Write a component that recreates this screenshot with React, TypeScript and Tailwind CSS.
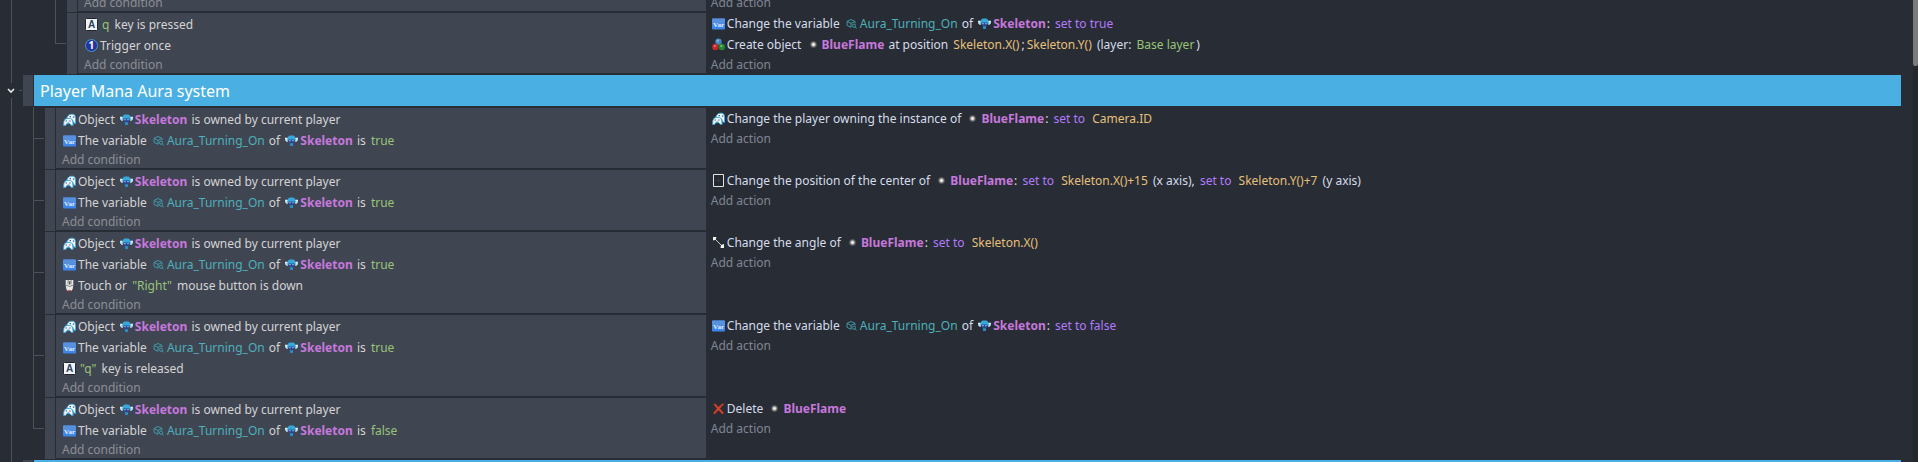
import type { ReactNode } from 'react'

type Token =
  | string
  | { kind: 'skeleton' | 'flame' | 'variable' | 'green' | 'operator' | 'expression'; text: string }

type IconName = 'owner' | 'var' | 'key' | 'once' | 'mouse' | 'create' | 'center' | 'angle' | 'delete'

interface Instruction {
  icon: IconName
  tokens: Token[]
}

interface EventData {
  conditions: Instruction[]
  actions: Instruction[]
}

const skeleton: Token = { kind: 'skeleton', text: 'Skeleton' }
const flame: Token = { kind: 'flame', text: 'BlueFlame' }
const aura: Token = { kind: 'variable', text: 'Aura_Turning_On' }
const green = (text: string): Token => ({ kind: 'green', text })
const operator = (text: string): Token => ({ kind: 'operator', text })
const expression = (text: string): Token => ({ kind: 'expression', text })

const ownedByPlayer: Instruction = {
  icon: 'owner',
  tokens: ['Object ', skeleton, ' is owned by current player'],
}
const auraIs = (value: string): Instruction => ({
  icon: 'var',
  tokens: ['The variable ', aura, ' of ', skeleton, ' is ', green(value)],
})
const setAura = (value: string): Instruction => ({
  icon: 'var',
  tokens: ['Change the variable ', aura, ' of ', skeleton, ': ', operator(`set to ${value}`)],
})

const previousEvent: EventData = {
  conditions: [
    { icon: 'key', tokens: [green('q'), ' key is pressed'] },
    { icon: 'once', tokens: ['Trigger once'] },
  ],
  actions: [
    setAura('true'),
    {
      icon: 'create',
      tokens: [
        'Create object ',
        flame,
        ' at position ',
        expression('Skeleton.X()'),
        ';',
        expression('Skeleton.Y()'),
        ' (layer: ',
        green('Base layer'),
        ')',
      ],
    },
  ],
}

const auraEvents: EventData[] = [
  {
    conditions: [ownedByPlayer, auraIs('true')],
    actions: [
      {
        icon: 'owner',
        tokens: [
          'Change the player owning the instance of ',
          flame,
          ': ',
          operator('set to'),
          ' ',
          expression('Camera.ID'),
        ],
      },
    ],
  },
  {
    conditions: [ownedByPlayer, auraIs('true')],
    actions: [
      {
        icon: 'center',
        tokens: [
          'Change the position of the center of ',
          flame,
          ': ',
          operator('set to'),
          ' ',
          expression('Skeleton.X()+15'),
          ' (x axis), ',
          operator('set to'),
          ' ',
          expression('Skeleton.Y()+7'),
          ' (y axis)',
        ],
      },
    ],
  },
  {
    conditions: [
      ownedByPlayer,
      auraIs('true'),
      { icon: 'mouse', tokens: ['Touch or ', green('"Right"'), ' mouse button is down'] },
    ],
    actions: [
      {
        icon: 'angle',
        tokens: ['Change the angle of ', flame, ': ', operator('set to'), ' ', expression('Skeleton.X()')],
      },
    ],
  },
  {
    conditions: [
      ownedByPlayer,
      auraIs('true'),
      { icon: 'key', tokens: [green('"q"'), ' key is released'] },
    ],
    actions: [setAura('false')],
  },
  {
    conditions: [ownedByPlayer, auraIs('false')],
    actions: [{ icon: 'delete', tokens: ['Delete ', flame] }],
  },
]

function Svg({ children }: { children: ReactNode }) {
  return (
    <svg viewBox="0 0 13 13" aria-hidden="true" className="w-[13px] h-[13px] shrink-0">
      {children}
    </svg>
  )
}

const icons: Record<IconName, ReactNode> = {
  owner: (
    <>
      <path d="M3.8 5 5 2.8Q6 1.2 8.3 1.2h1.6q1.9.1 2.3 2l.4 2.6v4.6l-2-.6L9.6 7Z" fill="#f4f9fd" stroke="#38a8e0" strokeWidth=".9" />
      <path d="M.6 12.4.9 8.6Q1.6 5.5 4.2 5.4h3q2 .3 2.4 2.6l.6 4.2H8L6.8 10.6H3.8L2.6 12.4Z" fill="#f4f9fd" stroke="#38a8e0" strokeWidth=".9" />
      <path d="M2.6 7.4H4v1.2H2.6zM6.2 7.4h1.4v1.2H6.2zM6.6 3.1H8v1.1H6.6zM9.8 3.5h1.4v1.2H9.8z" fill="#31588c" />
      <path d="M4.4 9.4h1.8" stroke="#7d94bb" strokeWidth=".8" />
    </>
  ),
  var: (
    <>
      <rect x="0" y="1.5" width="13" height="11" rx="1" fill="#3d86ec" />
      <rect x="0" y="1.5" width="13" height="5" rx="1" fill="#5791dd" />
      <text x="6.5" y="9.6" textAnchor="middle" fill="#e4effc" className="font-['Liberation_Serif',serif] text-[7px] font-bold">
        Var
      </text>
    </>
  ),
  key: (
    <>
      <rect x=".5" y=".5" width="12" height="12" rx="1" fill="#f1f4f7" stroke="#20242c" />
      <text x="6.5" y="10" textAnchor="middle" fill="#28425f" className="font-['Liberation_Sans',sans-serif] text-[10px] font-bold">
        A
      </text>
    </>
  ),
  once: (
    <>
      <circle cx="6.5" cy="6.5" r="6" fill="#28349c" stroke="#4496c8" />
      <text x="6.3" y="10" textAnchor="middle" fill="#fff" className="font-['Noto_Sans',sans-serif] text-[10px] font-bold">
        1
      </text>
    </>
  ),
  mouse: (
    <>
      <path d="M2.7 1h7.6v5.5Q10 10.5 8.5 12h-4Q3 10.5 2.7 6.5Z" fill="#e9e9e6" />
      <path d="M5.1 1v4.2M8 1v4.2M3 6.2l3.5 1.2L10 6.2" fill="none" stroke="#66686d" strokeWidth=".8" />
      <path d="M6.2 2.2h1v3.2h-1z" fill="#38393d" />
      <path d="M4.6 11.2h3.8v1.3H4.6z" fill="#a23f43" />
    </>
  ),
  create: (
    <>
      <circle cx="6.5" cy="3.8" r="3.2" fill="#4287bf" />
      <circle cx="5.8" cy="2.7" r="1.2" fill="#82b7dc" />
      <circle cx="3.3" cy="9" r="3.2" fill="#bf2a2b" />
      <circle cx="9.8" cy="9" r="3.2" fill="#23882f" />
      <circle cx="2.8" cy="8" r="1" fill="#f0817f" />
      <circle cx="9.3" cy="8" r="1" fill="#78d47d" />
    </>
  ),
  center: (
    <>
      <path d="M1.5.5h10v12h-10z" fill="#24272d" stroke="#e3e3e3" />
      <path d="M6.5 3.5v6M3.5 6.5h6" stroke="#454950" strokeDasharray="1 1" />
    </>
  ),
  angle: (
    <>
      <path d="M2.5 2.5 10.5 10.5" stroke="#c9c9c9" />
      <path d="M1 1h3.5L3.6 3.8 1 4.5ZM9 9l3-1v4H8.5Z" fill="#f4f4ee" />
    </>
  ),
  delete: (
    <path d="M1.6 2.4 3 1.4 6.5 5 10.8 1.3 11.8 2.2 8 6.5l3.8 4.4-1.4 1.3L6.5 8.3l-4 3.9L1.2 11 5 6.7Z" fill="#d2452a" stroke="#8d2a1b" strokeWidth=".5" />
  ),
}

function SkeletonIcon() {
  return (
    <Svg>
      <path d="M0 3.8h2.8v4H1.6L.3 6.4ZM13 3.8h-2.8v4h1.2l1.3-1.4Z" fill="#dff3fb" />
      <path d="M1.6 5.2h1.6v1.6H1.6zM9.8 5.2h1.6v1.6H9.8z" fill="#58b9e2" />
      <path d="M2.6 4.8Q3 1.6 5 1.5h3q2 .1 2.4 3.3L9.8 7H3.2Z" fill="#36a9dc" />
      <path d="M3.4 5.4h6.2v2.4L8.5 9.2h-4L3.4 7.8Z" fill="#2b468f" />
      <path d="M4.3 6h1.4v1.2H4.3zM7.3 6h1.4v1.2H7.3z" fill="#8fbfe8" />
      <path d="M4.8 9.2h3.4L7.8 12H5.2Z" fill="#2c8fc9" />
    </Svg>
  )
}

function FlameIcon() {
  return (
    <Svg>
      <defs>
        <radialGradient id="flame">
          <stop offset="0" stopColor="#fff" />
          <stop offset=".3" stopColor="#d8d4d0" />
          <stop offset="1" stopColor="#5a5a5c" stopOpacity="0" />
        </radialGradient>
      </defs>
      <circle cx="6.5" cy="6.5" r="4.2" fill="url(#flame)" />
    </Svg>
  )
}

function VariableIcon() {
  return (
    <svg viewBox="0 0 11 11" aria-hidden="true" className="w-[11px] h-[11px] shrink-0">
      <g fill="none" stroke="#3f9aa3">
        <path d="M5 9.3 1 7.4V3.4L5 1.5l4 1.9v2M1 3.4l4 2 4-2M5 5.4v3.9" />
        <circle cx="8" cy="7.7" r="1.6" />
        <path d="m9.2 8.9 1.5 1.6" />
      </g>
    </svg>
  )
}

const tokenColors = {
  green: 'text-[#98c379]',
  operator: 'text-[#b17bff]',
  expression: 'text-[#e5c07b]',
}

function TokenView({ token }: { token: Token }) {
  if (typeof token === 'string') return <span>{token}</span>
  if (token.kind === 'skeleton' || token.kind === 'flame') {
    return (
      <span className="flex items-center gap-[2px] ml-[2px] mr-px font-bold text-[#c678dd]">
        {token.kind === 'skeleton' ? <SkeletonIcon /> : <FlameIcon />}
        {token.text}
      </span>
    )
  }
  if (token.kind === 'variable') {
    return (
      <span className="flex items-center gap-[3px] ml-[3px] mr-px text-[#4db0ba]">
        <VariableIcon />
        {token.text}
      </span>
    )
  }
  return <span className={`mx-[2px] ${tokenColors[token.kind]}`}>{token.text}</span>
}

function InstructionLine({ instruction }: { instruction: Instruction }) {
  return (
    <div className="flex items-center h-[21px] pl-px whitespace-pre">
      <span className="mr-[2px]">
        <Svg>{icons[instruction.icon]}</Svg>
      </span>
      {instruction.tokens.map((token, i) => (
        <TokenView key={i} token={token} />
      ))}
    </div>
  )
}

function AddButton({ label }: { label: string }) {
  return (
    <button type="button" className="block h-[17px] leading-[17px] opacity-50">
      {label}
    </button>
  )
}

function EventRow({ event, width, last = false }: { event: EventData; width: string; last?: boolean }) {
  return (
    <div className="flex">
      <div className="flex flex-col w-[12px] pr-px shrink-0">
        <div className="flex-1 border-l border-b border-[#4d515b]" />
        <div className={last ? 'flex-1' : 'flex-1 border-l border-[#4d515b]'} />
      </div>
      <div className="w-[10px] mt-px mr-px shrink-0 bg-[#404552]" />
      <div className={`shrink-0 my-px pt-px pl-[6px] bg-[#404552] text-[#d4d4d4] ${width}`}>
        {event.conditions.map((condition, i) => (
          <InstructionLine key={i} instruction={condition} />
        ))}
        <AddButton label="Add condition" />
      </div>
      <div className="flex flex-col items-start gap-px flex-1 min-w-0 my-px pl-[5px] text-[#d5dcec]">
        <div>
          {event.actions.map((action, i) => (
            <InstructionLine key={i} instruction={action} />
          ))}
        </div>
        <AddButton label="Add action" />
      </div>
    </div>
  )
}

export default function App() {
  return (
    <div className="flex h-screen overflow-hidden bg-[#282c34] font-['Noto_Sans',sans-serif] text-[12px]">
      <div className="flex flex-col w-[23px] shrink-0">
        <div className="h-[83px] w-px ml-[11px] bg-[#4d515b]" />
        <div className="flex items-center justify-end gap-[4px] h-[15px] pr-px">
          <button type="button" aria-label="Collapse group">
            <svg viewBox="0 0 8 6" className="block w-[8px] h-[6px]" fill="none" stroke="#e6e6e6" strokeWidth="1.6">
              <path d="m1 1 3 3 3-3" />
            </svg>
          </button>
          <div className="w-[3px] h-px bg-[#4d515b]" />
        </div>
        <div className="flex-1 w-px ml-[11px] bg-[#4d515b]" />
      </div>

      <main className="flex-1 min-w-0">
        <div className="ml-[32px] mb-px">
          <div className="flex items-end h-[12px] overflow-hidden">
            <div className="w-[12px] h-full shrink-0 border-l border-[#4d515b]" />
            <div className="w-[10px] h-full mr-px shrink-0 bg-[#404552]" />
            <div className="w-[calc(36.8vw-78px)] mb-px pl-[6px] shrink-0 bg-[#404552] text-[#d4d4d4]">
              <AddButton label="Add condition" />
            </div>
            <div className="mb-px pl-[5px] text-[#d5dcec]">
              <AddButton label="Add action" />
            </div>
          </div>
          <EventRow event={previousEvent} width="w-[calc(36.8vw-78px)]" last />
        </div>

        <div className="flex gap-px h-[31px] mb-px">
          <div className="w-[10px] bg-[#404552]" />
          <h2 className="flex-1 pt-px pl-[6px] bg-[#4ab0e4] text-white text-[16px] leading-[31px]">
            Player Mana Aura system
          </h2>
        </div>

        <div className="ml-[10px] mb-px">
          {auraEvents.map((event, i) => (
            <EventRow
              key={i}
              event={event}
              width="w-[calc(36.8vw-56px)]"
              last={i === auraEvents.length - 1}
            />
          ))}
        </div>

        <div className="flex gap-px h-[31px]">
          <div className="w-[10px] bg-[#404552]" />
          <div className="flex-1 bg-[#4ab0e4]" />
        </div>
      </main>

      <div className="w-[5px] ml-[12px] shrink-0 bg-[#24272b]">
        <div className="h-[66px] rounded-b-xs bg-[#7b7b7b]" />
      </div>
    </div>
  )
}
